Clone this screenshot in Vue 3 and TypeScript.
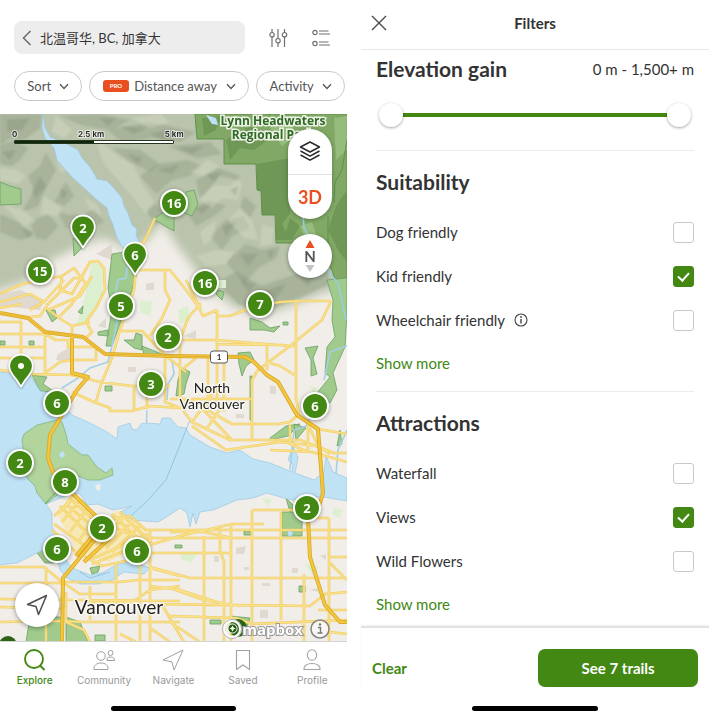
<script setup lang="ts">
import { ref } from 'vue'

interface Pin {
  x: number
  y: number
  label: string
  drop?: boolean
}

interface Option {
  id: string
  label: string
  checked: boolean
  info?: boolean
}

interface Group {
  title: string
  options: Option[]
}

const MAP_W = 347
const MAP_H = 527

const place = (x: number, y: number) => ({
  left: `${(x / MAP_W) * 100}%`,
  top: `${(y / MAP_H) * 100}%`,
})

const pins: Pin[] = [
  { x: 174, y: 89, label: '16' },
  { x: 83, y: 114, label: '2', drop: true },
  { x: 135, y: 141, label: '6', drop: true },
  { x: 40, y: 157, label: '15' },
  { x: 205, y: 169, label: '16' },
  { x: 121, y: 192, label: '5' },
  { x: 260, y: 190, label: '7' },
  { x: 168, y: 223, label: '2' },
  { x: 21, y: 253, label: '', drop: true },
  { x: 151, y: 270, label: '3' },
  { x: 57, y: 289, label: '6' },
  { x: 315, y: 292, label: '6' },
  { x: 20, y: 349, label: '2' },
  { x: 65, y: 368, label: '8' },
  { x: 307, y: 394, label: '2' },
  { x: 102, y: 414, label: '2' },
  { x: 57, y: 435, label: '6' },
  { x: 137, y: 437, label: '6' },
]

const darkHills = [
  'M0 114H42L40 128 24 140 10 138 0 146Z',
  'M0 146 14 140 28 148 20 160 12 166 0 164Z',
  'M46 152 56 170 48 184 38 206 22 212 34 190 28 176 40 166Z',
  'M66 182 74 196 64 206 54 202Z',
  'M58 212 80 218 94 208 104 222 84 232 66 228Z',
  'M108 130 150 122 196 132 180 142 150 138 124 144Z',
  'M112 148 140 150 160 164 150 172 130 162Z',
  'M140 176 158 164 188 160 202 166 190 176 172 180 156 194Z',
  'M168 146 210 142 222 154 196 158Z',
  'M60 116 100 114 130 120 112 130 84 126Z',
  'M0 214 18 222 34 236 20 240 0 232Z',
  'M196 180 218 168 240 176 230 186 214 186 200 198Z',
  'M186 212 208 200 226 206 214 216 196 226Z',
  'M210 236 226 220 244 216 250 228 232 236 222 250Z',
  'M226 262 246 244 262 250 280 246 276 258 258 268 244 284Z',
  'M216 282 236 272 262 286 290 276 326 268 330 284 296 300 262 312 238 304Z',
  'M244 196 256 206 250 218 240 208Z',
  'M146 210 156 204 164 216 156 226Z',
  'M30 222 48 214 58 226 46 240 36 238Z',
]

const lightHills = [
  'M56 116 72 130 64 138 52 132Z',
  'M94 136 112 152 134 166 142 184 154 202 146 214 132 196 118 180 104 164Z',
  'M0 168 16 170 26 176 18 184 0 180Z',
  'M44 196 62 208 58 216 40 214Z',
  'M84 196 98 206 102 216 90 210Z',
  'M132 118 160 114 170 122 150 128Z',
  'M190 172 208 160 220 166 204 176Z',
  'M220 176 242 182 238 200 222 198 212 208 200 200Z',
  'M228 220 240 208 252 220 258 240 244 238Z',
  'M200 232 216 220 214 236 204 246Z',
  'M262 224 274 228 272 244 260 246Z',
  'M196 256 216 250 234 252 226 264 206 266Z',
  'M56 158 70 170 60 172Z',
  'M2 204 24 210 36 222 24 226Z',
]

const ridges = [
  'M6 120 30 118 22 130 8 132ZM2 152 16 150 10 160ZM40 176 46 186 36 198 32 192Z',
  'M60 188 68 192 62 200ZM70 214 86 216 80 224ZM22 228 34 232 28 238Z',
  'M120 126 146 128 134 134ZM128 154 142 158 138 164ZM158 170 180 164 172 174Z',
  'M178 148 204 146 192 154ZM150 134 170 130 180 136 164 140ZM100 118 116 118 108 126Z',
  'M206 174 222 172 214 182ZM196 208 212 204 202 214ZM222 226 236 222 226 236Z',
  'M240 254 258 254 248 266ZM268 252 274 250 270 260ZM240 280 256 284 248 292Z',
  'M262 292 286 284 276 298ZM300 278 316 274 308 286ZM230 190 238 186 236 196Z',
]

const highway = [
  'M0 313 28 318 45 332 83 337 105 354 170 356 245 357 254 362 267 375 278 382 297 415 318 429 323 493 320 503 308 518 310 557 325 605 340 622H347',
  'M72 335V373L88 377 77 390 50 435 48 458 53 472 72 493 106 526 63 578 62 642',
  'M96 532 76 556M110 538 84 562',
]

const roads = [
  'M0 294 22 284 62 276 60 290 72 294 90 262 98 261 104 268 105 290 96 308 86 322 92 332 86 338',
  'M0 302 30 294 44 302 30 310M0 308 22 304',
  'M44 302 64 280M46 306 74 278 84 278M48 310 80 296 92 276',
  'M46 308 62 320 72 326 90 322M62 276 74 268 86 284 72 304 60 316',
  'M46 307 40 316 20 318M72 326V336',
  'M0 322H21V373M0 334H45V373M0 347H45M0 358H45',
  'M45 334 56 340H68V347H96V360H72',
  'M45 373 60 362 72 360M0 370 30 374 72 375',
  'M72 375 100 382 132 386H170M72 392 94 402 110 408V411H132L150 406 180 408 196 400',
  'M96 402 101 384 112 358 120 330 134 290 136 270',
  'M155 218 146 238 138 252M136 270H170L186 290 198 306 203 316 217 310',
  'M165 270V290L170 300 162 318 150 336M120 331H142L166 356 186 372',
  'M134 386V409M147 384V409M165 357V402L180 408',
  'M186 280 200 308V304L188 318 180 340V402',
  'M217 310V382M217 316H230L250 308 280 302 296 301H331',
  'M296 301V398L299 414 290 422 278 424H232L214 414 196 402H180',
  'M331 301 322 320 290 346 258 370 252 380V440',
  'M180 340H217L290 346H296M217 344 284 345M267 346V370M267 362 280 366 296 376',
  'M208 358V412M217 358V406M224 358V412M196 358 184 368',
  'M170 399H252M184 400V412L192 422 230 440 300 440 334 453H347',
  'M192 426 226 450 280 442 318 446 330 454',
  'M192 422 214 392M206 430 226 400M196 402 232 440',
  'M290 424V444L308 452V424M318 429 347 434M318 446 308 424',
  'M54 516 72 500 96 522M54 524 88 548M60 506 98 544M66 504 104 536M52 530 76 552',
  'M74 494 60 512M80 500 62 522M88 508 70 532M96 516 78 542',
  'M106 520 130 516 146 530H347M110 526 140 538H347M112 514 148 548M120 512 152 544',
  'M100 544 124 516M106 548 132 522M112 552 140 526M90 560 148 534M92 564 152 540M84 556 102 566 130 560',
  'M150 530V642M140 538V642M116 562V642M150 568 180 576',
  'M0 567 44 567 62 582H120L138 580H180M46 567V642M0 583H62M0 599 180 601M0 607 62 609',
  'M0 622 62 621 84 622H180M66 592V622L84 630 90 642M90 586V620M62 582 80 594H116',
  'M140 548 180 536 232 524H264M170 532H204L232 538M204 536V642M220 528V550L224 562V642M231 524V642M252 510V642M252 510H300M281 512V620M304 574V642M329 518V642',
  'M150 553H232M150 567 190 578H347M150 586 180 590 226 605M150 604 310 606 325 594 347 592',
  'M170 616 236 618 252 624 347 620M170 622 200 642M170 588 204 600 240 606',
  'M308 518H329M329 557H347M329 562 347 580M318 610H347M330 632 347 634',
  'M150 628 170 642M120 634 136 642M160 601 172 622 184 642M180 586 150 590 132 602H90',
  'M270 450 312 452M312 452 347 462',
]

const parks = [
  'M0 182 10 186 21 189V204L0 205Z',
  'M154 219 166 210 174 216V231L163 225Z',
  'M186 192 194 190 198 204 192 216 182 212Z',
  'M73 238 82 248 74 256Z',
  'M112 254 124 252 136 276 132 290 112 346 106 346 112 310 108 288Z',
  'M46 310 55 310 57 318 52 322Z',
  'M78 312 83 306 82 314Z',
  'M98 332 108 330V336L98 335Z',
  'M32 375 47 377 43 384 55 392 40 391Z',
  'M124 340 134 340 136 333 142 335V350L134 348Z',
  'M142 346 152 350 164 355H144Z',
  'M182 368 190 372 186 384 184 394 176 396 178 380Z',
  'M238 353 250 352 254 360 246 366 242 376 239 364Z',
  'M250 318 262 322 270 328 280 326 274 332 264 330 250 330Z',
  'M218 290 224 292 222 300 216 294Z',
  'M305 348 318 346 313 358 317 374 311 376 311 360Z',
  'M327 280 347 278V313L345 347 333 373 337 390 330 403 317 393 330 377 325 373 327 347 335 337 332 320 333 300Z',
  'M340 430 342 444 337 446Z',
  'M270 438 286 426 300 424 288 436 270 440Z',
  'M294 424 306 428 296 440Z',
  'M250 376H252V420H250Z',
  'M105 386H112V391H105Z',
  'M29 341H34V345H29ZM0 341H5V345H0Z',
  'M282 512H302V536H282Z',
  'M286 498 294 506 290 512Z',
  'M244 531H252V535H244ZM175 545H182V548H175ZM299 586H305V592H299ZM283 322H288V325H283Z',
  'M30 617H62V642H26ZM66 617 80 622 88 642H66Z',
  'M95 635H105V641H95ZM210 620H221V624H210Z',
  'M90 568 100 566 98 572 92 574Z',
  'M34 549 43 548 54 563H45Z',
  'M230 616 250 618 246 630 236 634Z',
]

const paleGreens = [
  'M92 262 103 266 102 296 88 320 76 326 84 300Z',
  'M140 300 152 302 150 316 140 312Z',
  'M178 310 188 306 190 320 180 324Z',
  'M214 280H226V288H214Z',
  'M262 498 272 500 268 506Z',
  'M305 564 318 566 316 580Z',
  'M180 552 196 554 192 562 182 560Z',
  'M334 508 342 510 340 518 332 514Z',
  'M310 386 318 388 314 396Z',
]

const buildings = [
  'M98 326 106 318V328ZM128 367H136V372H128ZM58 354 72 346V362L56 360Z',
  'M146 284 154 282V290H146ZM236 414H244V418H236ZM270 386H276V394H270ZM184 336 196 330V340Z',
  'M236 548 246 546 244 554H236ZM214 556H219V562H214ZM262 583H270V586H262ZM292 568H298V573H292ZM260 610H268V618H260ZM244 567H249V570H244Z',
  'M0 294 20 290 44 300 40 310 0 306ZM96 254 112 244V260ZM320 556 326 554V560ZM310 590 318 588V592Z',
]

const groups = ref<Group[]>([
  {
    title: 'Suitability',
    options: [
      { id: 'dog', label: 'Dog friendly', checked: false },
      { id: 'kid', label: 'Kid friendly', checked: true },
      { id: 'wheelchair', label: 'Wheelchair friendly', checked: false, info: true },
    ],
  },
  {
    title: 'Attractions',
    options: [
      { id: 'waterfall', label: 'Waterfall', checked: false },
      { id: 'views', label: 'Views', checked: true },
      { id: 'flowers', label: 'Wild Flowers', checked: false },
    ],
  },
])

const query = ref('北温哥华, BC, 加拿大')
const low = ref(0)
const high = ref(1500)
</script>

<template>
  <div class="board">
    <section class="phone explore">
      <header class="top">
        <div class="search-row">
          <div class="search">
            <button class="plain" aria-label="Back">
              <svg width="10" height="16" viewBox="0 0 10 16"><path d="M8.500 1 1.500 8l7 7" fill="none" stroke="#6a6a6a" stroke-width="1.500" /></svg>
            </button>
            <input v-model="query" type="text" aria-label="Search location" />
          </div>
          <button class="plain" aria-label="Filters">
            <svg width="20" height="20" viewBox="0 0 20 20" fill="none" stroke="#6f6f6f" stroke-width="1.200">
              <path d="M4 1v3.500M4 9v10M10 1v9.500M10 15v4M16.500 1v3.500M16.500 9v10" />
              <circle cx="4" cy="6.700" r="2.200" /><circle cx="10" cy="12.700" r="2.200" /><circle cx="16.500" cy="6.700" r="2.200" />
            </svg>
          </button>
          <button class="plain list-btn" aria-label="List view">
            <svg width="20" height="20" viewBox="0 0 20 20" fill="none" stroke="#6f6f6f" stroke-width="1.200">
              <circle cx="4" cy="4.500" r="2.200" /><circle cx="4" cy="15.500" r="2.200" />
              <path d="M8 3h9.500M8 6h11M8 14h9.500M8 17h11" />
            </svg>
          </button>
        </div>
        <div class="chips">
          <button class="chip">
            Sort
            <svg width="10" height="7" viewBox="0 0 10 7"><path d="m1 1.200 4 4.300 4-4.300" fill="none" stroke="#555" stroke-width="1.300" /></svg>
          </button>
          <button class="chip wide">
            <span class="pro">PRO</span>Distance away
            <svg width="10" height="7" viewBox="0 0 10 7"><path d="m1 1.200 4 4.300 4-4.300" fill="none" stroke="#555" stroke-width="1.300" /></svg>
          </button>
          <button class="chip">
            Activity
            <svg width="10" height="7" viewBox="0 0 10 7"><path d="m1 1.200 4 4.300 4-4.300" fill="none" stroke="#555" stroke-width="1.300" /></svg>
          </button>
        </div>
      </header>

      <div class="map">
        <svg class="terrain" viewBox="0 114 347 527" preserveAspectRatio="none" aria-hidden="true">
          <defs>
            <filter id="soft" x="-5%" y="-5%" width="110%" height="110%"><feGaussianBlur stdDeviation="1.200" /></filter>
            <filter id="edge" x="-5%" y="-5%" width="110%" height="110%"><feGaussianBlur stdDeviation="5" /></filter>
          </defs>
          <rect y="114" width="347" height="527" fill="#f1ede8" />
          <path d="M-20 90H370V290L325 292 296 304 262 316 236 308 214 292 194 268 176 244 162 222 148 240 128 250 104 238 76 248 44 264 24 282-20 296Z" fill="#bac4ac" filter="url(#edge)" />
          <g filter="url(#soft)">
            <path v-for="d in darkHills" :key="d" :d="d" fill="#7f8a70" opacity=".3" />
            <path v-for="d in lightHills" :key="d" :d="d" fill="#d9dfca" opacity=".4" />
            <path v-for="d in ridges" :key="d" :d="d" fill="#6f7a62" opacity=".25" />
          </g>

          <path d="M195 114 197 139H224V164H256L257 190 261 191 262 215H275L276 243H310L332 270 336 284 347 292V114Z" fill="#81a965" stroke="#5f9149" stroke-width="1" />
          <g fill="#618a4b" opacity=".55">
            <path d="M257 164 290 158V214L282 224 290 240H276V215H262L261 191 257 190Z" />
            <path d="M226 140 250 126 268 140 254 150 240 148 230 160Z" />
            <path d="M202 118 222 116 216 130 204 136Z" />
            <path d="M336 206 347 190V262L338 250 328 230Z" />
            <path d="M290 218 300 226 292 240 284 238Z" />
          </g>
          <g fill="#a5c98a" opacity=".6">
            <path d="M268 124 290 120 296 136 282 146Z" />
            <path d="M334 118 347 116V150L336 160Z" />
            <path d="M300 226 312 222 318 240 306 240Z" />
          </g>
          <path d="M347 140 342 170 335 182 334 202M328 216V262" fill="none" stroke="#5f9149" />
          <path d="M206 115 216 118 218 125 212 124Z" fill="#bfe1f4" />

          <path v-for="d in paleGreens" :key="d" :d="d" fill="#dcefcf" />
          <path v-for="d in buildings" :key="d" :d="d" fill="#e0d9d0" />
          <path d="M56 512 74 498 104 520 118 510 146 530 144 546 108 562 78 552Z" fill="#f8e7a8" opacity=".8" />
          <path v-for="d in parks" :key="d" :d="d" fill="#a0cb8d" stroke="#69a065" stroke-width=".8" />
          <path d="M303 214 304 228 309 236M328 270 338 284 343 306 346 320" fill="none" stroke="#9ccbe6" stroke-width="1.500" />

          <g fill="#bfe2f5" stroke="#9bc7e2" stroke-width=".7">
            <path d="M43 114 45 128 50 137 65 143 78 150 82 158 90 167 95 175 97 179 107 181 113 187 122 198 124 206 128 213 132 225 137 229 136 235 140 244 133 251 123 248 117 238 113 225 108 213 107 208 97 200 83 187 72 177 63 167 57 160 54 148 45 138 42 127Z" />
            <path d="M-2 372 30 375 40 391 54 394 64 406 72 415 90 423 107 432 117 439 118 427 130 423 132 429 137 430 142 423 146 424 147 410V423L160 424 162 418H170L178 427 186 428 190 435 210 447 227 453 240 450 253 459 270 463 292 472 293 464 288 460 293 446 298 458 295 473 314 480 324 472 326 456 333 472 347 478V501L323 497 303 497 296 500 287 499 267 493 253 498 237 500 213 510 200 512 196 524 193 513 190 527 187 513 180 508 165 518 158 522 133 520 120 512 132 506 123 508 113 510 98 504 87 505 80 494 72 493 46 504 52 513 52 527 62 543 60 552 45 546 43 550 33 555 17 563-2 565Z" />
            <path d="M58 561 66 560 72 568 90 575 102 573 118 564 132 562 150 568 144 574 124 572 112 580 98 584 80 584 67 578 60 570Z" />
            <path d="M288 530 293 532 292 536 288 536Z" />
          </g>
          <path d="M62 388 78 378 90 368 108 362 112 346 117 322 114 300 118 280 126 278 128 264M172 360 174 374 168 384 167 400M347 346 330 352 324 380M290 470 294 430 306 426 312 414M336 474 338 450 347 430" fill="none" stroke="#a4d0e8" stroke-width="1.600" />
          <path d="M190 420 166 480 148 500 131 516M80 572 90 578 110 572" fill="none" stroke="#78aecb" stroke-width=".6" />
          <path d="M22 440 24 434 37 425 57 420 62 422 66 434 68 444 82 455 88 455 97 467 106 473 112 468 113 475 100 480 88 480 78 476 72 494 66 488 46 504 37 493 35 486 29 480 20 468 24 454Z" fill="#b2d49d" stroke="#84b586" stroke-width=".8" />
          <path d="M59 454 63 451 65 456 61 458Z" fill="#bfe2f5" />
          <path d="M95 485 101 484 100 490 97 491Z" fill="#f1ede8" />
          <path d="M45 504 56 492" stroke="#6aa468" fill="none" />

          <path :d="roads.join('')" fill="none" stroke="#efcb5d" stroke-width="2.600" stroke-linejoin="round" />
          <path :d="roads.join('')" fill="none" stroke="#f9e08b" stroke-width="1.500" stroke-linejoin="round" />
          <path :d="highway.join('')" fill="none" stroke="#d6a62a" stroke-width="4" stroke-linejoin="round" />
          <path :d="highway.join('')" fill="none" stroke="#f3c63c" stroke-width="2.500" stroke-linejoin="round" />
          <path d="M0 313 28 318 45 332 83 337 105 354 170 356 245 357" fill="none" stroke="#d6a62a" stroke-width=".6" />
        </svg>

        <div class="scale">
          <div class="scale-labels"><span>0</span><span>2.5 km</span><span>5 km</span></div>
          <div class="scale-bar"></div>
        </div>
        <p class="label park-label" :style="place(273, 14)">Lynn Headwaters<br />Regional Park</p>
        <p class="label town" :style="place(212, 282)">North<br />Vancouver</p>
        <p class="label city" :style="place(119, 493)">Vancouver</p>
        <span class="shield" :style="place(219, 243)">1</span>

        <i class="dot" :style="place(238, 514)"></i>
        <i class="dot" :style="place(8, 531)"></i>

        <button v-for="p in pins" :key="`${p.x}-${p.y}`" class="pin" :class="{ drop: p.drop }" :style="place(p.x, p.y)" :aria-label="p.label ? `${p.label} trails` : 'Trail'">
          <svg v-if="p.drop" width="28" height="36" viewBox="1 0 28 36">
            <path d="M15 1.500A11.800 11.800 0 0 0 3.200 13.300c0 5 3 8.200 6.200 12.100 2 2.500 3.600 5.200 5.600 8.100 2-2.900 3.600-5.600 5.600-8.100 3.200-3.900 6.200-7.100 6.200-12.100A11.800 11.800 0 0 0 15 1.500Z" fill="#428813" stroke="#fff" stroke-width="1.800" />
            <circle v-if="!p.label" cx="15" cy="13" r="3" fill="#fff" />
          </svg>
          <span>{{ p.label }}</span>
        </button>

        <div class="mapbox">
          <svg width="20" height="20" viewBox="0 0 20 20"><circle cx="10" cy="10" r="8.500" fill="none" stroke="#fff" stroke-width="3" /><circle cx="10" cy="10" r="9.500" fill="none" stroke="#999" stroke-width=".8" /><circle cx="10.500" cy="9.500" r="4.600" fill="#276010" stroke="#fff" stroke-width="1" /><path d="m10.500 6.500 1 2 2 1-2 1-1 2-1-2-2-1 2-1Z" fill="#fff" /></svg>
          <span>mapbox</span>
          <button class="plain" aria-label="Map information">
            <svg width="20" height="20" viewBox="0 0 20 20"><circle cx="10" cy="10" r="9" fill="#fff" fill-opacity=".55" stroke="#858585" stroke-width="1.500" /><path d="M8 8.500h2.500v5M7.500 14h5" fill="none" stroke="#777" stroke-width="1.400" /><circle cx="10" cy="5.500" r="1.200" fill="#777" /></svg>
          </button>
        </div>

        <div class="controls">
          <div class="pill">
            <button aria-label="Map layers">
              <svg width="22" height="22" viewBox="0 0 22 22" fill="none" stroke="#2b2b2b" stroke-width="1.500" stroke-linejoin="round"><path d="m11 1 9.500 5L11 11 1.500 6Z" /><path d="M1.500 10 11 15.200 20.500 10M1.500 14 11 19.200 20.500 14" /></svg>
            </button>
            <button class="three">3D</button>
          </div>
          <button class="compass" aria-label="Compass, north">
            <svg width="10" height="8" viewBox="0 0 10 8"><path d="M5 0 9.500 8h-9Z" fill="#ea4f1f" /></svg>
            <span>N</span>
            <svg width="10" height="7" viewBox="0 0 10 7"><path d="M5 7 9.500 0h-9Z" fill="#c4c4c4" /></svg>
          </button>
        </div>
        <button class="locate" aria-label="My location">
          <svg width="22" height="22" viewBox="0 0 22 22"><path d="M20.500 1.500 1.500 10.500l8.500 2 2.500 8Z" fill="none" stroke="#4d4d4d" stroke-width="1.500" stroke-linejoin="round" /></svg>
        </button>
      </div>

      <nav class="tabs">
        <a href="#explore" class="tab active">
          <svg width="24" height="24" viewBox="0 0 24 24" fill="none" stroke="#428813" stroke-width="1.900"><circle cx="11" cy="11" r="9" /><path d="m17 17.500 4.500 4.500" /></svg>
          Explore
        </a>
        <a href="#community" class="tab">
          <svg width="24" height="24" viewBox="0 0 24 24" fill="none" stroke="#a0a0a0" stroke-width="1"><circle cx="9" cy="8" r="4.300" /><path d="M2 21.500c-.5-4 2.500-6.500 7-6.500s7.500 2.500 7 6.500Z" /><circle cx="18.500" cy="5" r="2.500" /><path d="M15 12.500c-.3-2.300 1-3.500 3.500-3.500s4.300 1.200 4 3.500Z" /></svg>
          Community
        </a>
        <a href="#navigate" class="tab">
          <svg width="24" height="24" viewBox="0 0 24 24" fill="none" stroke="#a0a0a0" stroke-width="1" stroke-linejoin="round"><path d="M22 2 2 12l9 2 2 8Z" /></svg>
          Navigate
        </a>
        <a href="#saved" class="tab">
          <svg width="24" height="24" viewBox="0 0 24 24" fill="none" stroke="#a0a0a0" stroke-width="1.100"><path d="M5.500 2.500h13v19L12 17l-6.500 4.500Z" /></svg>
          Saved
        </a>
        <a href="#profile" class="tab">
          <svg width="24" height="24" viewBox="0 0 24 24" fill="none" stroke="#a0a0a0" stroke-width="1.100"><ellipse cx="12" cy="7" rx="4.700" ry="5.300" /><path d="M4 21.500c-.5-3.800 2.800-6 8-6s8.500 2.200 8 6Z" /></svg>
          Profile
        </a>
      </nav>
      <div class="home"></div>
    </section>

    <section class="phone filters">
      <header class="bar">
        <button class="plain" aria-label="Close">
          <svg width="16" height="16" viewBox="0 0 16 16"><path d="m1 1 14 14M15 1 1 15" fill="none" stroke="#4a4a4a" stroke-width="1.400" /></svg>
        </button>
        <h1>Filters</h1>
      </header>

      <div class="group elevation">
        <div class="heading">
          <h2>Elevation gain</h2>
          <output>0 m - 1,500+ m</output>
        </div>
        <div class="range">
          <input v-model.number="low" type="range" min="0" max="1500" aria-label="Minimum elevation gain" />
          <input v-model.number="high" type="range" min="0" max="1500" aria-label="Maximum elevation gain" />
        </div>
      </div>

      <div v-for="g in groups" :key="g.title" class="group">
        <h2>{{ g.title }}</h2>
        <div class="options">
          <div v-for="o in g.options" :key="o.id" class="option">
            <label :for="o.id">{{ o.label }}</label>
            <button v-if="o.info" class="plain" aria-label="About wheelchair friendly">
              <svg width="14" height="14" viewBox="0 0 14 14"><circle cx="7" cy="7" r="6" fill="none" stroke="#444" stroke-width="1.100" /><path d="M7 6v4.500" stroke="#444" stroke-width="1.400" /><circle cx="7" cy="4" r=".9" fill="#444" /></svg>
            </button>
            <input :id="o.id" v-model="o.checked" type="checkbox" />
          </div>
        </div>
        <a href="#more" class="more">Show more</a>
      </div>

      <footer class="actions">
        <button class="clear">Clear</button>
        <button class="see">See 7 trails</button>
      </footer>
      <div class="home"></div>
    </section>
  </div>
</template>

<style>
body {
  background: #fff;
}
</style>

<style scoped>
.board {
  display: grid;
  grid-template-columns: 347fr 348fr;
  gap: 14px;
  min-height: 100vh;
  font-family: Lato, "Noto Sans CJK SC", sans-serif;
  color: #333;
}
.board *,
.board {
  box-sizing: border-box;
}
button,
input {
  font: inherit;
  color: inherit;
}
button {
  cursor: pointer;
}
svg {
  display: block;
  flex: none;
}
.plain {
  padding: 0;
  border: 0;
  background: none;
}
h1,
h2,
p {
  margin: 0;
}
.phone {
  display: flex;
  flex-direction: column;
  min-width: 0;
}
.top {
  padding: 21px 0 13px 14px;
}
.search-row {
  display: flex;
  align-items: center;
}
.search {
  flex: 1;
  min-width: 0;
  height: 33px;
  display: flex;
  align-items: center;
  gap: 8px;
  padding: 0 8px;
  margin-right: 23px;
  border-radius: 8px;
  background: #ededed;
}
.search input {
  flex: 1;
  min-width: 0;
  padding: 0;
  border: 0;
  outline: 0;
  background: none;
  font-size: 13px;
}
.list-btn {
  margin: 0 16px 0 23px;
}
.chips {
  display: flex;
  gap: 7px;
  margin-top: 17px;
  padding-right: 2px;
}
.chip {
  flex: 1 1 auto;
  height: 30px;
  display: flex;
  align-items: center;
  justify-content: center;
  gap: 8px;
  padding: 0 12px;
  border: 1px solid #c9c9c9;
  border-radius: 15px;
  background: #fff;
  font-size: 13px;
  color: #555;
  white-space: nowrap;
}
.chip.wide {
  gap: 5px;
}
.chip.wide svg {
  margin-left: 4px;
}
.pro {
  padding: 0 7px;
  border-radius: 3px;
  background: #ea4f1f;
  color: #fff;
  font-size: 6px;
  font-weight: 700;
  line-height: 12px;
}
.map {
  position: relative;
  flex: 1;
  min-height: 480px;
  overflow: hidden;
  border-bottom: 1px solid #d4d4d4;
}
.terrain {
  position: absolute;
  inset: 0;
  width: 100%;
  height: 100%;
}
.label,
.shield,
.pin,
.dot {
  position: absolute;
  transform: translate(-50%, -50%);
}
.label {
  text-align: center;
  white-space: nowrap;
  -webkit-text-stroke: 3px rgba(248, 247, 242, 0.9);
  paint-order: stroke fill;
}
.park-label {
  font: 700 12px/14px "Open Sans", sans-serif;
  color: #2e6b25;
}
.town {
  font-size: 14px;
  line-height: 16px;
  color: #222;
}
.city {
  font-size: 19px;
  line-height: 20px;
  color: #222;
}
.shield {
  width: 18px;
  height: 13px;
  border: 1px solid #555;
  border-radius: 3px;
  background: #fff;
  font-size: 8px;
  line-height: 11px;
  font-weight: 700;
  text-align: center;
}
.dot {
  width: 18px;
  height: 18px;
  border-radius: 50%;
  background: #2b6216;
}
.pin {
  width: 28px;
  height: 28px;
  display: grid;
  place-items: center;
  padding: 0;
  border: 2px solid #fff;
  border-radius: 50%;
  background: #428813;
  box-shadow: 0 1px 4px rgba(0, 0, 0, 0.4);
  color: #fff;
  font: 700 13px/16px "Open Sans", sans-serif;
}
.pin.drop {
  grid-template-rows: 28px;
  border: 0;
  background: none;
  box-shadow: none;
}
.pin.drop svg {
  grid-area: 1 / 1;
  align-self: start;
  filter: drop-shadow(0 1px 1px rgba(0, 0, 0, 0.35));
}
.pin.drop span {
  grid-area: 1 / 1;
  z-index: 1;
}
.scale {
  position: absolute;
  top: 14px;
  left: 14px;
  width: 46%;
}
.scale-labels {
  display: flex;
  justify-content: space-between;
  margin: 0 -10px 0 -2px;
  font: 600 8px/12px Inter, sans-serif;
  color: #222;
  -webkit-text-stroke: 2px rgba(255, 255, 255, 0.6);
  paint-order: stroke fill;
}
.scale-bar {
  height: 4px;
  border: 1px solid #26351f;
  border-radius: 1px;
  background: linear-gradient(90deg, #10280a 50%, #fff 50%);
}
.controls {
  position: absolute;
  top: 15px;
  right: 15px;
  width: 44px;
  display: grid;
  gap: 15px;
}
.pill {
  overflow: hidden;
  border-radius: 22px;
  background: #fff;
  box-shadow: 0 1px 4px rgba(0, 0, 0, 0.3);
}
.pill button {
  width: 100%;
  height: 45px;
  display: grid;
  place-items: center;
  padding: 0;
  border: 0;
  background: none;
}
.pill .three {
  border-top: 1px solid #e0e0e0;
  font-size: 18px;
  font-weight: 700;
  color: #ea4f1f;
}
.compass {
  height: 44px;
  display: flex;
  flex-direction: column;
  align-items: center;
  justify-content: center;
  gap: 1px;
  padding: 0;
  border: 0;
  border-radius: 50%;
  background: #fff;
  box-shadow: 0 1px 4px rgba(0, 0, 0, 0.4);
  font-size: 15px;
  line-height: 15px;
  font-weight: 700;
  color: #555;
}
.locate {
  position: absolute;
  left: 15px;
  bottom: 14px;
  width: 44px;
  height: 44px;
  display: grid;
  place-items: center;
  padding: 0;
  border: 0;
  border-radius: 50%;
  background: #fff;
  box-shadow: 0 1px 5px rgba(0, 0, 0, 0.4);
}
.mapbox {
  position: absolute;
  right: 17px;
  bottom: 2px;
  display: flex;
  align-items: center;
  font: 700 15px/20px "Open Sans", sans-serif;
  color: #fff;
}
.mapbox span {
  margin-right: 7px;
  -webkit-text-stroke: 2px #999;
  paint-order: stroke fill;
}
.tabs {
  display: grid;
  grid-template-columns: repeat(5, 1fr);
  padding-top: 6px;
}
.tab {
  display: flex;
  flex-direction: column;
  align-items: center;
  gap: 2px;
  font: 10px/12px Inter, sans-serif;
  color: #999;
  text-decoration: none;
}
.tab.active {
  color: #428813;
  font-weight: 500;
}
.home {
  width: 36%;
  height: 5px;
  margin: 20px auto 7px;
  border-radius: 3px;
  background: #000;
}
.bar {
  height: 50px;
  display: grid;
  grid-template-columns: 36px 1fr 36px;
  align-items: center;
  padding-bottom: 4px;
  border-bottom: 1px solid #e8e8e8;
}
.bar .plain {
  justify-self: end;
  padding-right: 10px;
}
h1 {
  font-size: 15px;
  line-height: 20px;
  text-align: center;
}
h2 {
  font-size: 21px;
  line-height: 24px;
}
.group {
  margin: 0 15px;
  padding: 19px 0 18px;
  border-bottom: 1px solid #ebebeb;
}
.group:nth-last-child(3) {
  padding-bottom: 12px;
  border-bottom: 0;
}
.elevation {
  padding: 7px 0 23px;
}
.heading {
  display: flex;
  align-items: center;
  justify-content: space-between;
}
output {
  font-size: 15px;
}
.range {
  display: grid;
  align-items: center;
  height: 24px;
  margin: 22px 3px 0;
  background: linear-gradient(#428813, #428813) center / calc(100% - 24px) 4px no-repeat;
}
.range input {
  grid-area: 1 / 1;
  width: 100%;
  height: 24px;
  margin: 0;
  appearance: none;
  background: none;
  pointer-events: none;
}
.range input::-webkit-slider-thumb {
  width: 24px;
  height: 24px;
  appearance: none;
  border-radius: 50%;
  background: #fff;
  box-shadow: 0 1px 3px rgba(0, 0, 0, 0.35);
  pointer-events: auto;
}
.options {
  display: grid;
  margin: 16px 0 11px;
}
.option {
  height: 44px;
  display: flex;
  align-items: center;
  gap: 9px;
  font-size: 15px;
}
.option input {
  width: 21px;
  height: 21px;
  display: grid;
  place-items: center;
  margin: 0 0 0 auto;
  appearance: none;
  border: 1px solid #c9c9c9;
  border-radius: 3px;
  background: #fff;
}
.option input:checked {
  border-color: #428813;
  background: #428813;
}
.option input:checked::after {
  content: "";
  width: 5px;
  height: 9px;
  margin-bottom: 2px;
  border: solid #fff;
  border-width: 0 2px 2px 0;
  transform: rotate(42deg);
}
.more {
  display: block;
  font-size: 15px;
  line-height: 20px;
  color: #428813;
  text-decoration: none;
}
.actions {
  display: flex;
  align-items: center;
  justify-content: space-between;
  margin-top: auto;
  padding: 21px 11px 0;
  border-top: 2px solid #e2e2e2;
  box-shadow: 0 -1px 2px rgba(0, 0, 0, 0.06);
  font-size: 15px;
  font-weight: 700;
}
.clear {
  padding: 0;
  border: 0;
  background: none;
  color: #428813;
}
.see {
  width: 49%;
  height: 38px;
  padding: 0;
  border: 0;
  border-radius: 7px;
  background: #428813;
  color: #fff;
}
.filters .home {
  margin-top: 19px;
}
</style>
